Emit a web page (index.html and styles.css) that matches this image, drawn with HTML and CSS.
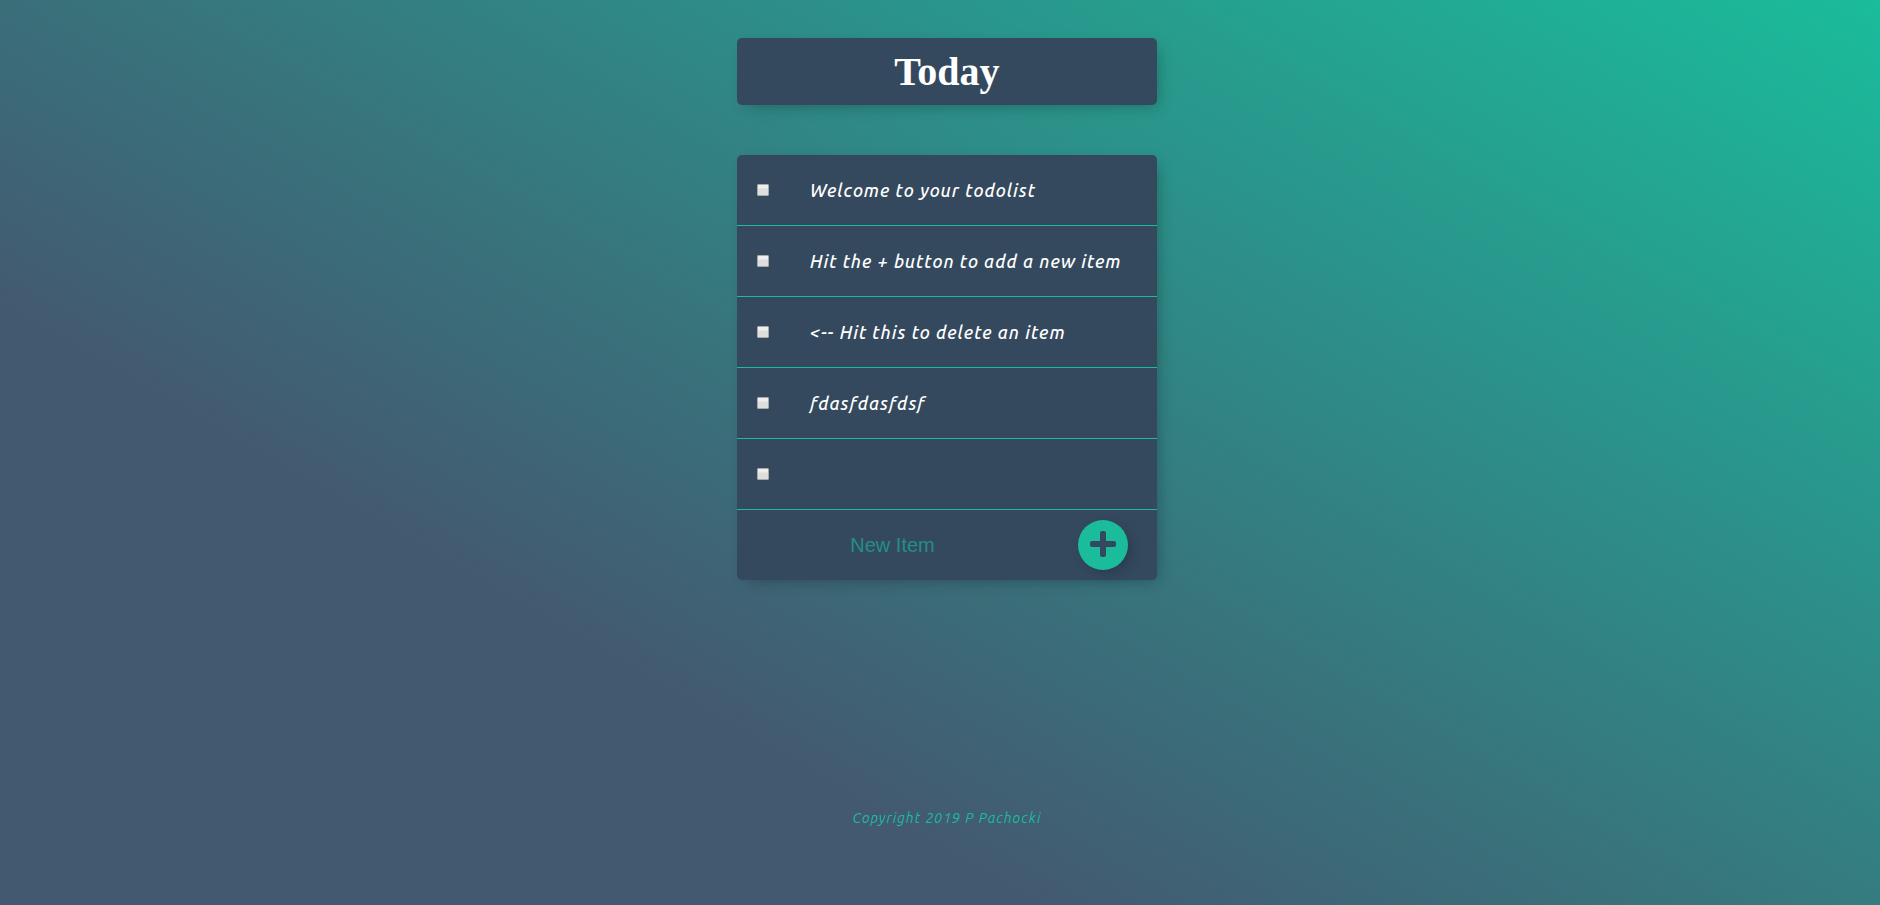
FILE: index.html
```html
<!DOCTYPE html>
<html lang="en">
<head>
<meta charset="utf-8">
<title>To Do List</title>
<link rel="stylesheet" href="styles.css">
</head>
<body>
<main class="page">
  <header class="box heading"><h1 class="title">Today</h1></header>
  <section class="box list">
    <div class="item">
      <input class="check" type="checkbox" id="item-1">
      <label class="text" for="item-1">Welcome to your todolist</label>
    </div>
    <div class="item">
      <input class="check" type="checkbox" id="item-2">
      <label class="text" for="item-2">Hit the + button to add a new item</label>
    </div>
    <div class="item">
      <input class="check" type="checkbox" id="item-3">
      <label class="text" for="item-3">&lt;-- Hit this to delete an item</label>
    </div>
    <div class="item">
      <input class="check" type="checkbox" id="item-4">
      <label class="text" for="item-4">fdasfdasfdsf</label>
    </div>
    <div class="item">
      <input class="check" type="checkbox" id="item-5" aria-label="Empty item">
    </div>
    <form class="item new-item">
      <input class="entry" type="text" placeholder="New Item" aria-label="New Item" autocomplete="off">
      <button class="add" type="button" aria-label="Add item">
        <svg class="plus" viewBox="0 0 26 26" aria-hidden="true"><path d="M12 0h2q2 0 2 2v8h8q2 0 2 2v2q0 2-2 2h-8v8q0 2-2 2h-2q-2 0-2-2v-8H2q-2 0-2-2v-2q0-2 2-2h8V2q0-2 2-2z"/></svg>
      </button>
    </form>
  </section>
</main>
<footer class="footer">Copyright 2019 P Pachocki</footer>
</body>
</html>
```
FILE: styles.css
```css
* { box-sizing: border-box; }

body {
  margin: 0;
  min-height: 100vh;
  padding: 38px 0 0 14px;
  background: linear-gradient(30deg, #435970 30%, #1abc9c);
  color: #fff;
  font-family: Ubuntu, "Noto Sans", sans-serif;
}

.page {
  display: flex;
  flex-direction: column;
  gap: 50px;
  max-width: 420px;
  margin: 0 auto;
}

.box {
  background: #34495e;
  border-radius: 5px;
  box-shadow: 5px 5px 15px -5px rgba(0, 0, 0, 0.3);
}

.heading { padding: 10px; }

.title {
  margin: 0;
  font: bold 40px/47px "Liberation Serif", serif;
  text-align: center;
}

.item {
  display: flex;
  align-items: center;
  min-height: 71px;
  border-bottom: 1px solid #1abc9c;
}

.check {
  appearance: none;
  flex: none;
  width: 12px;
  height: 12px;
  margin: 0 41px 0 20px;
  border: 1px solid #a9a9a9;
  border-radius: 1px;
  background: linear-gradient(#eee 30%, #dedede 40%);
}

.check:checked { background: #1abc9c; }

.text {
  font-size: 18px;
  font-style: italic;
  font-weight: 500;
  letter-spacing: 1px;
}

.new-item {
  min-height: 70px;
  border: 0;
  padding-right: 29px;
}

.entry {
  flex: 1;
  min-width: 0;
  height: 60px;
  padding: 0 30px 0 0;
  border: 0;
  outline: 0;
  background: transparent;
  color: #1abc9c;
  font: 20px "Liberation Sans", sans-serif;
  text-align: center;
}

.entry::placeholder { color: #1abc9c; opacity: 0.6; }

.add {
  display: flex;
  justify-content: center;
  flex: none;
  width: 50px;
  height: 50px;
  padding: 11px 0 0;
  border: 0;
  border-radius: 50%;
  background: #1abc9c;
  box-shadow: 5px 5px 15px -5px rgba(0, 0, 0, 0.3);
}

.plus {
  width: 26px;
  height: 26px;
  fill: #34495e;
}

.footer {
  margin-top: 229px;
  color: #1abc9c;
  font-size: 14px;
  font-style: italic;
  line-height: 18px;
  letter-spacing: 1px;
  text-align: center;
}
```
